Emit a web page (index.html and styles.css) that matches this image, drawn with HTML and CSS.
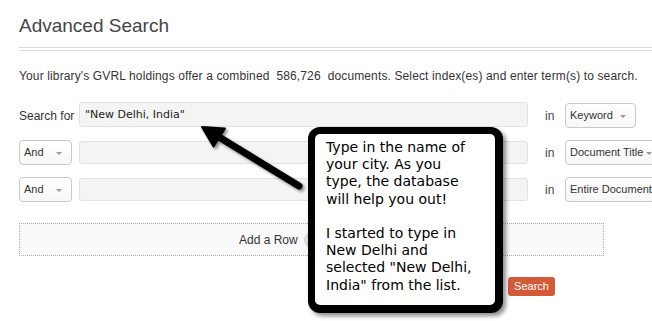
FILE: index.html
```html
<!DOCTYPE html>
<html>
<head>
<meta charset="utf-8">
<link rel="stylesheet" href="styles.css">
</head>
<body>
<div class="page">
  <h1 class="title">Advanced Search</h1>
  <div class="rule"></div>
  <p class="intro">Your library's GVRL holdings offer a combined&nbsp; 586,726&nbsp; documents. Select index(es) and enter term(s) to search.</p>
  <div class="rows">
    <div class="row">
      <span class="lead label">Search for</span>
      <div class="field field-main">"New Delhi, India"</div>
      <span class="in">in</span>
      <div class="select sel-keyword">Keyword<span class="caret"></span></div>
    </div>
    <div class="row">
      <div class="lead select sel-and">And<span class="caret"></span></div>
      <div class="field"></div>
      <span class="in">in</span>
      <div class="select sel-title">Document Title<span class="caret"></span></div>
    </div>
    <div class="row">
      <div class="lead select sel-and">And<span class="caret"></span></div>
      <div class="field"></div>
      <span class="in">in</span>
      <div class="select sel-wide">Entire Document<span class="caret"></span></div>
    </div>
  </div>
  <div class="addrow">Add a Row <span class="plus"></span></div>
  <div class="actions"><span class="search-btn">Search</span></div>
</div>

<svg class="arrow" width="652" height="321" viewBox="0 0 652 321">
  <line x1="299" y1="186" x2="214" y2="134" stroke="#000" stroke-width="7" stroke-linecap="round"/>
  <polygon points="202,127 225,128.5 213.5,146.5" fill="#000" stroke="#000" stroke-width="2" stroke-linejoin="round"/>
</svg>

<div class="callout">
  <div class="callout-inner">Type in the name of<br>your city. As you<br>type, the database<br>will help you out!<br><br>I started to type in<br>New Delhi and<br>selected "New Delhi,<br>India" from the list.</div>
</div>
</body>
</html>
```
FILE: styles.css
```css
* { box-sizing: border-box; }
html, body { margin: 0; padding: 0; background: #fff; }
body {
  width: 652px;
  height: 321px;
  overflow: hidden;
  position: relative;
  font-family: "Liberation Sans", Arial, sans-serif;
  color: #333;
}
.page { padding: 14px 0 0 19px; }
.title {
  margin: 0;
  font-size: 19px;
  line-height: 24px;
  font-weight: normal;
  color: #444;
}
.rule {
  margin-top: 9px;
  height: 4px;
  border-top: 1px solid #dcdcdc;
  border-bottom: 1px solid #dcdcdc;
}
.intro {
  margin: 17px 0 0;
  font-size: 12px;
  line-height: 16px;
  letter-spacing: 0.13px;
  color: #333;
  white-space: nowrap;
}
.rows {
  margin-top: 19px;
  display: flex;
  flex-direction: column;
  gap: 12px;
}
.row {
  display: flex;
  align-items: center;
  height: 25px;
}
.lead { width: 53px; flex: none; margin-right: 7px; }
.label { font-size: 12px; white-space: nowrap; color: #333; }
.field {
  width: 449px;
  height: 23px;
  flex: none;
  background: #f4f4f4;
  border: 1px solid #e2e2e2;
  border-radius: 3px;
}
.field-main {
  height: 25px;
  margin-top: -2px;
  padding-left: 5px;
  font-family: "DejaVu Sans", Verdana, sans-serif;
  font-size: 11px;
  line-height: 23px;
  color: #222;
}
.in {
  width: 37px;
  flex: none;
  padding-left: 17px;
  font-size: 12px;
  color: #444;
}
.select {
  position: relative;
  height: 25px;
  border: 1px solid #c9c9c9;
  border-radius: 4px;
  background: linear-gradient(#fff, #f7f7f7);
  font-size: 11px;
  line-height: 23px;
  padding-left: 4px;
  color: #333;
  white-space: nowrap;
  flex: none;
}
.caret {
  position: absolute;
  top: 11px;
  right: 9px;
  width: 0;
  height: 0;
  border-left: 3px solid transparent;
  border-right: 3px solid transparent;
  border-top: 3px solid #999;
}
.sel-and { width: 53px; }
.sel-keyword { width: 71px; }
.sel-title { width: 97px; }
.sel-wide { width: 110px; }
.addrow {
  margin-top: 21px;
  width: 585px;
  height: 33px;
  border: 1px dotted #aaa;
  background: #f9f9f9;
  display: flex;
  align-items: center;
  padding-left: 219px;
  gap: 6px;
  font-size: 12px;
  color: #333;
}
.plus {
  width: 18px;
  height: 18px;
  border-radius: 50%;
  background: #ddd;
}
.actions {
  margin-top: 20px;
  padding-left: 489px;
}
.search-btn {
  display: inline-block;
  width: 47px;
  height: 19px;
  line-height: 19px;
  text-align: center;
  background: #d35a39;
  border-radius: 3px;
  color: #fff;
  font-size: 11px;
}
.arrow {
  position: absolute;
  left: 0;
  top: 0;
  filter: drop-shadow(2px 2px 1.5px rgba(0,0,0,0.45));
}
.callout {
  position: absolute;
  left: 308px;
  top: 127px;
  width: 195px;
  height: 186px;
  background: #000;
  border-radius: 12px;
  padding: 7px 8px 8px 7px;
  box-shadow: 3px 3px 4px rgba(0,0,0,0.45);
}
.callout-inner {
  width: 100%;
  height: 100%;
  background: #fff;
  border-radius: 5px;
  padding: 5px 0 0 11px;
  font-family: "DejaVu Sans", Verdana, sans-serif;
  font-size: 14px;
  line-height: 17.2px;
  color: #000;
  white-space: nowrap;
}
```
